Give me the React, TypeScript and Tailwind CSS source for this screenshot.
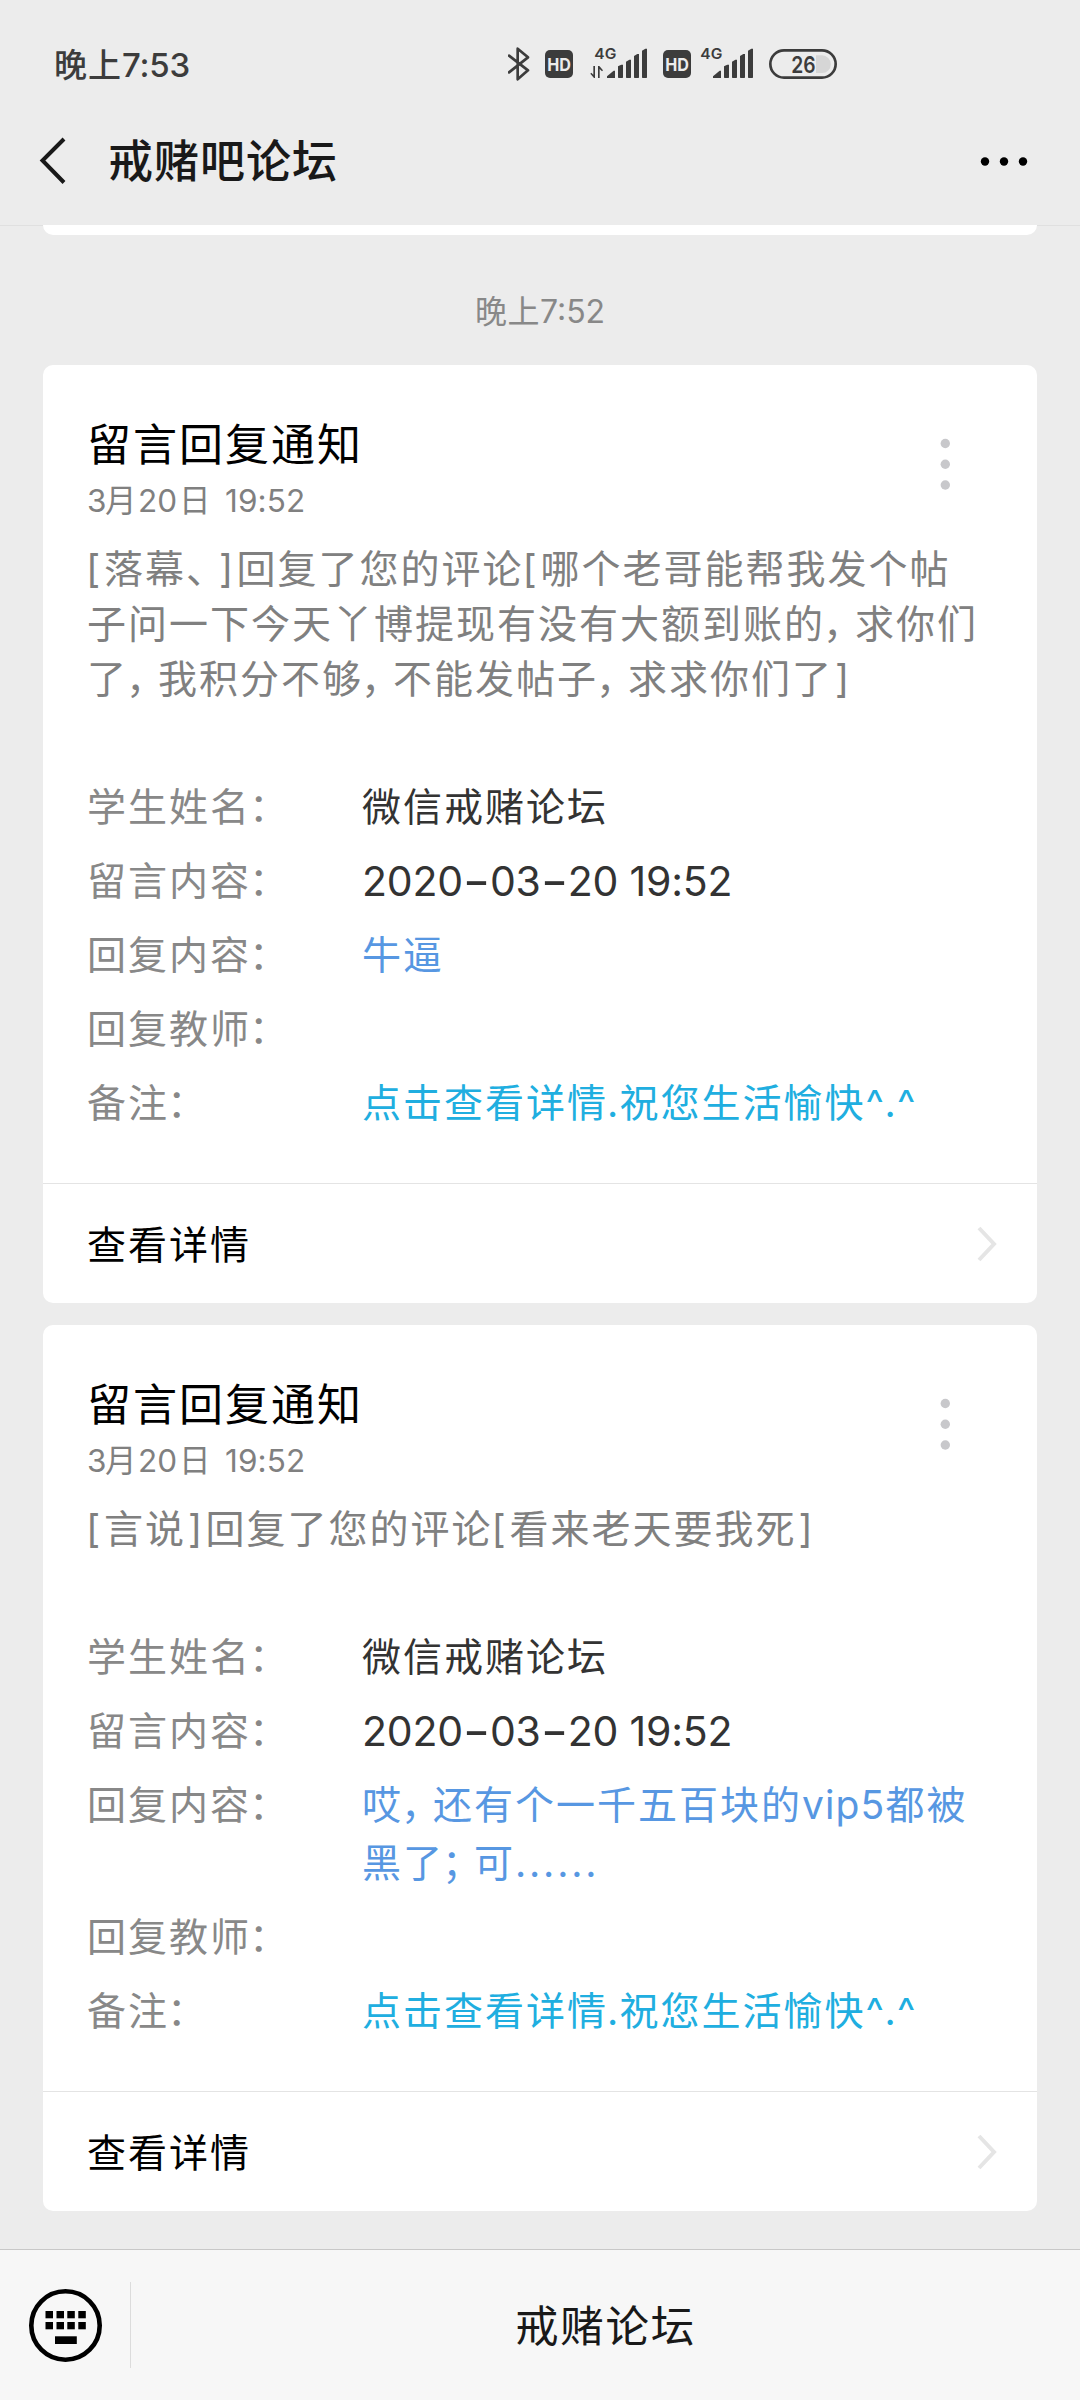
import React from "react";

type Row = { label: string; lines: string[]; tone: string };

const DARK = "text-[#333333]";
const BLUE = "text-[#5797e2]";
const CYAN = "text-[#20aee0]";

/* Spacing for punctuation and Latin runs inside Chinese text. */
const SPACING: Record<string, string> = {
  "，": "ml-[-2px] tracking-[-7px]",
  "；": "ml-[-2px] tracking-[-7px]",
  "、": "tracking-[-8px]",
  "：": "ml-[-2px]",
  "[": "inline-block w-[17px] text-left -indent-px",
  "]": "inline-block w-[19.5px] text-left indent-[2px]",
  ".": "inline-block w-[11.5px] text-left -indent-px tracking-[0]",
  "^": "inline-block w-[20px] text-left tracking-[0]",
  "......": "tracking-[2.8px]",
  vip5: "tracking-[1.1px]",
};

function Txt({ children }: { children: string }) {
  return (
    <>
      {children.split(/(\.{6}|vip5|[，；、：[\].^])/).map((part, i) =>
        SPACING[part] ? (
          <span key={i} className={SPACING[part]}>
            {part}
          </span>
        ) : (
          <React.Fragment key={i}>{part}</React.Fragment>
        ),
      )}
    </>
  );
}

/* Date and time with wide hyphens. */
function Stamp({ children }: { children: string }) {
  return (
    <span className="text-[41px] tracking-[-0.2px]">
      {children.split(/(-)/).map((part, i) =>
        part === "-" ? (
          <span key={i} className="inline-block w-[27px] scale-x-[1.45] text-center font-medium tracking-[0]">
            -
          </span>
        ) : (
          <React.Fragment key={i}>{part}</React.Fragment>
        ),
      )}
    </span>
  );
}

function Signal({ arrows }: { arrows?: boolean }) {
  return (
    <svg
      className={arrows ? "ml-[17px] h-[70px] w-[58px]" : "ml-[9px] h-[70px] w-[54px]"}
      viewBox={arrows ? "330 0 174 210" : "342 0 162 210"}
      fill="#3c3c3c"
    >
      <text x="343" y="86" fontSize="43" fontWeight="600" textLength="66" lengthAdjust="spacingAndGlyphs">
        4G
      </text>
      {arrows && <path d="M340 108h5v36h-3l-11-13 3-3 6 6zM354 108h4l11 13-3 3-7-7v27h-5z" />}
      <path d="M381 144v-5l20-17h4v22z" />
      <path d="M414 142v-33l10-5h5v38q0 2-2 2h-11q-2 0-2-2z" />
      <path d="M438 142v-47l10-6h5v53q0 2-2 2h-11q-2 0-2-2z" />
      <path d="M462 142v-64l10-6h5v70q0 2-2 2h-11q-2 0-2-2z" />
      <path d="M486 142v-80l10-6h5v86q0 2-2 2h-11q-2 0-2-2z" />
    </svg>
  );
}

function Hd() {
  return (
    <svg className="h-[70px] w-[28px]" viewBox="195 0 84 210">
      <rect x="195" y="60" width="84" height="84" rx="15" fill="#3c3c3c" />
      <text x="202" y="122" fontSize="52" fontWeight="700" fill="#ececec" textLength="71" lengthAdjust="spacingAndGlyphs">
        HD
      </text>
    </svg>
  );
}

function StatusBar() {
  return (
    <div className="flex h-[70px] items-center pl-[54px] text-[#3c3c3c]">
      <div className="w-[454px] text-[33px] font-medium leading-[70px]">
        <span className="tracking-[1px]">晚上</span>
        <span className="tracking-[-0.2px]">7:53</span>
      </div>
      <svg className="h-[70px] w-[22px]" viewBox="84 0 66 210" fill="none" stroke="#3c3c3c" strokeWidth="8">
        <path d="M87 77L144 121L113 148V56L144 82L87 127" strokeLinejoin="round" strokeLinecap="round" />
      </svg>
      <div className="ml-[15px]">
        <Hd />
      </div>
      <Signal arrows />
      <div className="ml-[15px]">
        <Hd />
      </div>
      <Signal />
      <svg className="ml-[15px] h-[70px] w-[68px]" viewBox="867 0 204 210">
        <path d="M1008 76h18a26 26 0 0 1 0 53h-18z" fill="#d6d6d6" />
        <rect x="871" y="61" width="196" height="82" rx="41" fill="none" stroke="#3c3c3c" strokeWidth="8" />
        <text x="934" y="128" fontSize="70" fontWeight="600" fill="#3c3c3c" textLength="73" lengthAdjust="spacingAndGlyphs">
          26
        </text>
      </svg>
    </div>
  );
}

function Card({ body, rows }: { body: string[]; rows: Row[] }) {
  return (
    <section className="mx-[43px] rounded-[10px] bg-white">
      <div className="px-[44px] pb-[51px] pt-[50px]">
        <div className="flex justify-between">
          <div>
            <h2 className="h-[60px] text-[44px] leading-[60px] tracking-[2px] text-black">留言回复通知</h2>
            <p className="mt-[6px] flex h-10 whitespace-pre text-[31.5px] leading-10 text-[#808080]">
              <span className="w-[18px]">3</span>
              <span className="w-[33px]">月</span>
              <span className="w-[41px]">20</span>
              <span className="w-[46px]">日</span>
              <span className="tracking-[0.1px]">19:52</span>
            </p>
          </div>
          <svg className="mr-[42px] mt-[19px] h-[60px] w-[12px]" viewBox="0 0 12 60" fill="#c8c8cb">
            <circle cx="6.300" cy="9.500" r="4.700" />
            <circle cx="6.300" cy="30.200" r="4.700" />
            <circle cx="6.300" cy="51" r="4.700" />
          </svg>
        </div>
        <div className="mt-[20px] text-[39px] leading-[55px] tracking-[2px] text-[#808080]">
          {body.map((line) => (
            <p key={line} className="h-[55px] whitespace-nowrap">
              <Txt>{line}</Txt>
            </p>
          ))}
        </div>
        <dl className="mt-[72px] flex flex-col gap-4 text-[39px] leading-[58px] tracking-[2px]">
          {rows.map((row) => (
            <div key={row.label} className="flex">
              <dt className="w-[275px] text-[#888888]">
                <Txt>{row.label}</Txt>
              </dt>
              <dd className={row.tone}>
                {row.lines.map((line) => (
                  <p key={line} className="h-[58px] whitespace-nowrap">
                    {/^[\d\s:-]+$/.test(line) ? <Stamp>{line}</Stamp> : <Txt>{line}</Txt>}
                  </p>
                ))}
              </dd>
            </div>
          ))}
        </dl>
      </div>
      <div className="flex h-[120px] items-center justify-between border-t border-[#e4e4e4] pl-[44px] pr-[40px]">
        <span className="pt-[3px] text-[39px] tracking-[2px] text-black">查看详情</span>
        <svg className="h-[36px] w-[20px]" viewBox="0 0 20 36" fill="none" stroke="#e5e5e5" strokeWidth="4">
          <path d="M2 2L17 18L2 34" />
        </svg>
      </div>
    </section>
  );
}

const common: Row[] = [
  { label: "学生姓名：", lines: ["微信戒赌论坛"], tone: DARK },
  { label: "留言内容：", lines: ["2020-03-20 19:52"], tone: DARK },
];
const tail: Row[] = [
  { label: "回复教师：", lines: [], tone: DARK },
  { label: "备注：", lines: ["点击查看详情.祝您生活愉快^.^"], tone: CYAN },
];

export default function App() {
  return (
    <div
      lang="zh-CN"
      className="flex h-[2400px] w-[1080px] flex-col overflow-hidden bg-[#ececec] font-['Inter','Noto_Sans_CJK_SC',sans-serif]"
    >
      <header className="h-[226px] shrink-0 border-b border-[#e0e0e0] pt-[30px]">
        <StatusBar />
        <div className="flex h-[122px] items-center pl-[38px] pr-[50px]">
          <svg className="h-[48px] w-[30px]" viewBox="0 0 30 48" fill="none" stroke="#191919" strokeWidth="4">
            <path d="M26 2L4.500 23.500L26 45.500" />
          </svg>
          <h1 className="ml-[40px] flex-1 pt-[2px] text-[45px] font-medium tracking-[1px] text-[#191919]">戒赌吧论坛</h1>
          <svg className="h-[12px] w-[50px]" viewBox="0 0 50 12" fill="#000">
            <circle cx="5" cy="6.500" r="4.200" />
            <circle cx="24" cy="6.500" r="4.200" />
            <circle cx="43" cy="6.500" r="4.200" />
          </svg>
        </div>
      </header>

      <main className="-mt-px flex-1">
        <div className="mx-[43px] h-[10px] rounded-b-[10px] bg-white" />
        <p className="mt-[53px] h-[48px] text-center text-[32px] leading-[48px] text-[#888888]">
          <span className="tracking-[0.5px]">晚上</span>7:52
        </p>
        <div className="mt-[29px] flex flex-col gap-[22px]">
          <Card
            body={[
              "[落幕、]回复了您的评论[哪个老哥能帮我发个帖",
              "子问一下今天丫博提现有没有大额到账的，求你们",
              "了，我积分不够，不能发帖子，求求你们了]",
            ]}
            rows={[...common, { label: "回复内容：", lines: ["牛逼"], tone: BLUE }, ...tail]}
          />
          <Card
            body={["[言说]回复了您的评论[看来老天要我死]"]}
            rows={[
              ...common,
              { label: "回复内容：", lines: ["哎，还有个一千五百块的vip5都被", "黑了；可......"], tone: BLUE },
              ...tail,
            ]}
          />
        </div>
      </main>

      <footer className="flex h-[151px] shrink-0 border-t border-[#c8c8c8] bg-[#f7f7f7]">
        <svg className="ml-[28px] mt-[38px] h-[76px] w-[76px]" viewBox="28 2288 76 76">
          <circle cx="65.500" cy="2325.500" r="34.200" fill="none" stroke="#000" strokeWidth="4.600" />
          {[2311, 2322].map((y) =>
            [45.5, 56.5, 67.3, 78.3].map((x) => <rect key={`${x}-${y}`} x={x} y={y} width="7.500" height="7.300" />),
          )}
          <rect x="55" y="2336.300" width="21.800" height="7.700" />
        </svg>
        <div className="ml-[26px] mt-[32px] h-[86px] w-px bg-[#dcdcdc]" />
        <div className="flex-1 pt-px text-center text-[43.5px] leading-[150px] tracking-[1.8px] text-[#191919]">
          戒赌论坛
        </div>
      </footer>
    </div>
  );
}
